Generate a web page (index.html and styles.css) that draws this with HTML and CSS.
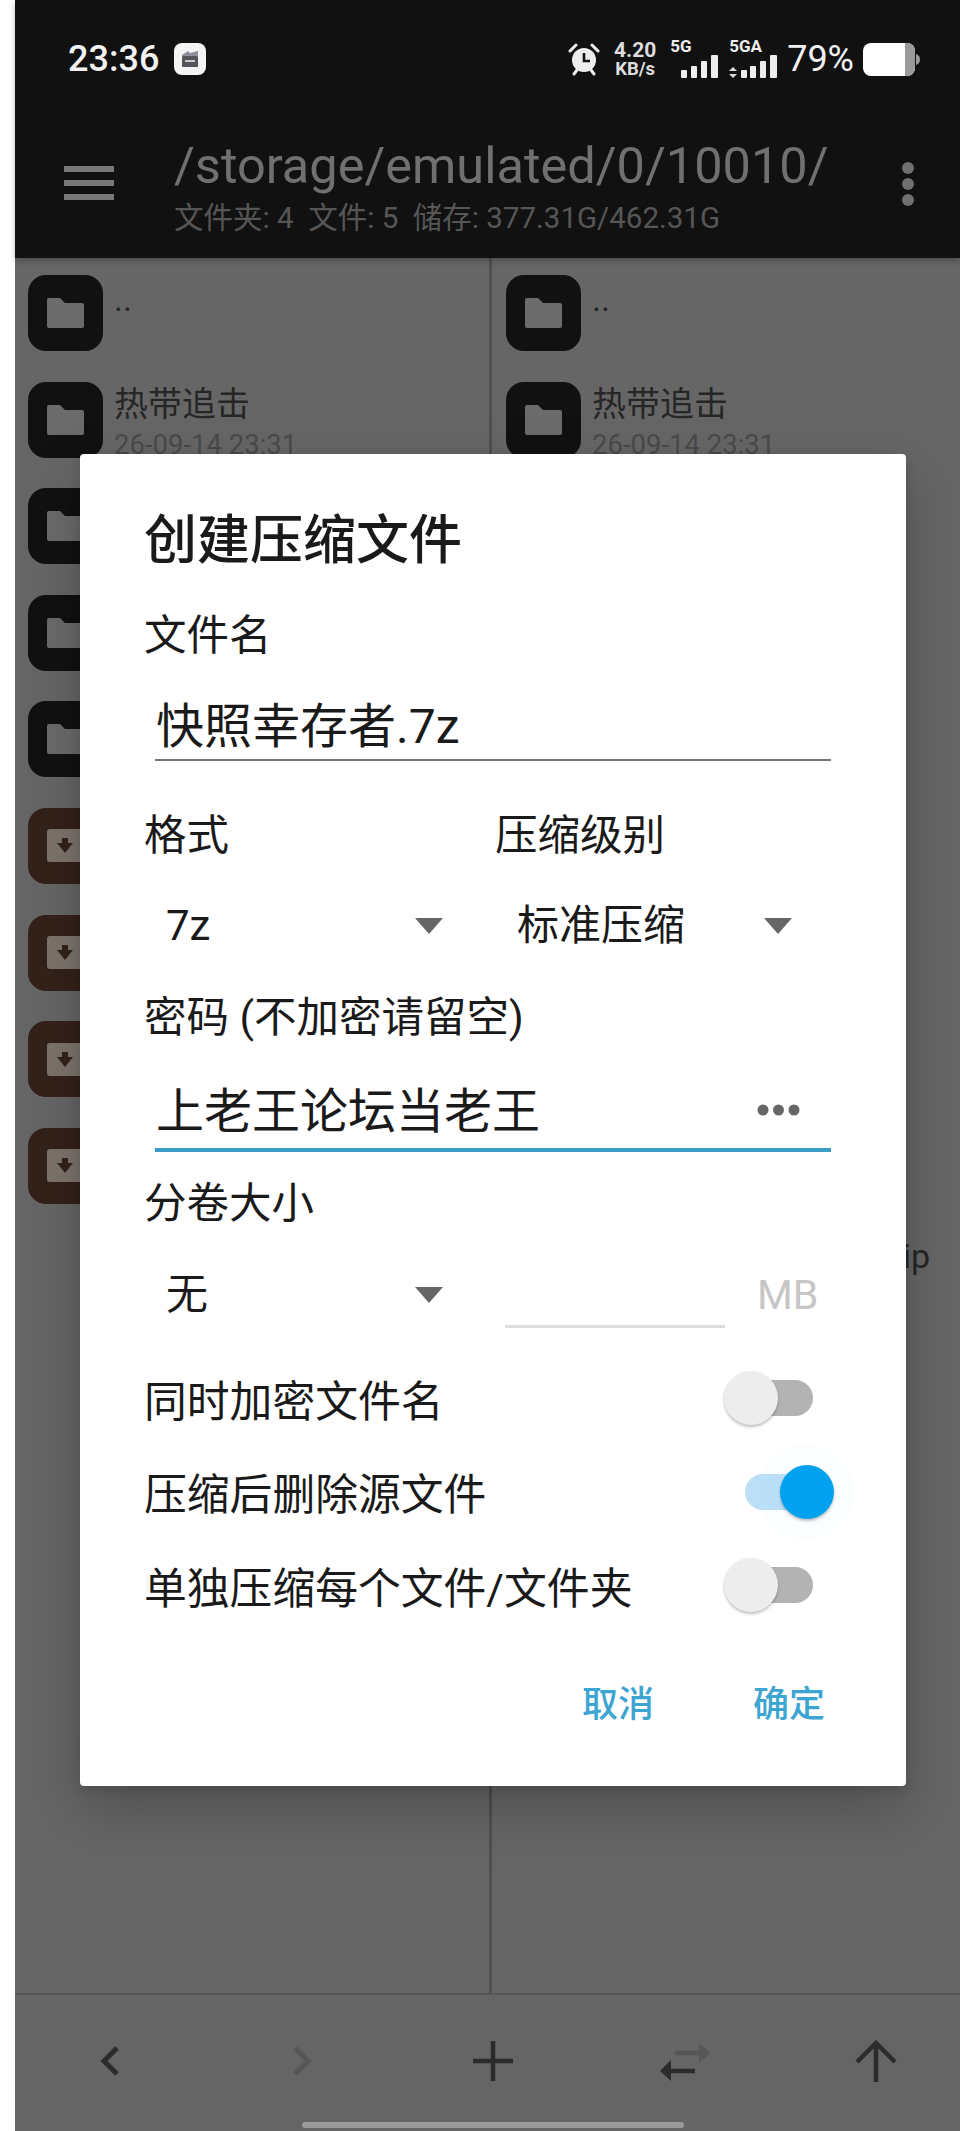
FILE: index.html
```html
<!DOCTYPE html>
<html lang="zh-CN">
<head>
<meta charset="utf-8">
<title>创建压缩文件</title>
<link rel="stylesheet" href="styles.css">
</head>
<body>
<div class="screen">
  <header class="header">
    <div class="status">
      <div class="status-left">
        <span class="time">23:36</span>
        <svg class="app-badge" width="32" height="32" viewBox="0 0 32 32"><rect width="32" height="32" rx="8" fill="#f4f4f4"/><path d="M8 12l6-4 2 2 8-2v5H8z" fill="#8d8f9c"/><rect x="8" y="13" width="16" height="11" rx="1" fill="#55565c"/><rect x="11" y="17" width="10" height="2" fill="#c9c9c9"/></svg>
      </div>
      <div class="status-right">
        <svg class="alarm" width="32" height="34" viewBox="0 0 32 34"><path d="M2 9l6-6M30 9l-6-6" stroke="#eee" stroke-width="3" stroke-linecap="round"/><circle cx="16" cy="18" r="12" fill="#eee"/><path d="M16 11v8h6" fill="none" stroke="#111" stroke-width="2.6"/><path d="M6 32l3-4M26 32l-3-4" stroke="#eee" stroke-width="3" stroke-linecap="round"/></svg>
        <div class="speed"><span class="speed-num">4.20</span><span class="speed-unit">KB/s</span></div>
        <div class="net">
          <span class="net-label">5G</span>
          <svg width="38" height="23" viewBox="0 0 38 23"><rect x="0" y="15" width="6" height="8" rx="1" fill="#eee"/><rect x="10" y="11" width="6" height="12" rx="1" fill="#eee"/><rect x="20" y="6" width="6" height="17" rx="1" fill="#eee"/><rect x="30" y="0" width="7" height="23" rx="1" fill="#eee"/></svg>
        </div>
        <div class="net net-second">
          <span class="net-label">5GA</span>
          <svg width="48" height="23" viewBox="0 0 48 23"><path d="M4 12l4 4H0zM4 23l-4-4h8z" fill="#ddd"/><rect x="12" y="15" width="6" height="8" rx="1" fill="#eee"/><rect x="21" y="11" width="6" height="12" rx="1" fill="#eee"/><rect x="31" y="6" width="6" height="17" rx="1" fill="#eee"/><rect x="41" y="0" width="7" height="23" rx="1" fill="#eee"/></svg>
        </div>
        <span class="percent">79%</span>
        <svg class="battery" width="57" height="33" viewBox="0 0 57 33"><path d="M8 0h36a8 8 0 0 1 8 8v17a8 8 0 0 1-8 8H8a8 8 0 0 1-8-8V8a8 8 0 0 1 8-8z" fill="#fff"/><path d="M42 0h2a8 8 0 0 1 8 8v17a8 8 0 0 1-8 8h-2z" fill="#9a9a9a"/><path d="M53 11c3 1 4 3 4 5.500s-1 4.500-4 5.500z" fill="#9a9a9a"/></svg>
      </div>
    </div>
    <div class="toolbar">
      <div class="burger"><i></i><i></i><i></i></div>
      <div class="path-block">
        <div class="path">/storage/emulated/0/10010/</div>
        <div class="stats">文件夹: 4&nbsp;&nbsp;文件: 5&nbsp;&nbsp;储存: 377.31G/462.31G</div>
      </div>
      <div class="kebab"><i></i><i></i><i></i></div>
    </div>
  </header>

  <main class="panes">
    <section class="pane pane-left">
      <div class="row"><div class="ficon"><svg width="37" height="30" viewBox="0 0 37 30"><path d="M2 0h11l5 5h17a2 2 0 0 1 2 2v21a2 2 0 0 1-2 2H2a2 2 0 0 1-2-2V2a2 2 0 0 1 2-2z" fill="#6b6b6b"/></svg></div><div class="rtext"><div class="rname rname-up">..</div></div></div>
      <div class="row"><div class="ficon"><svg width="37" height="30" viewBox="0 0 37 30"><path d="M2 0h11l5 5h17a2 2 0 0 1 2 2v21a2 2 0 0 1-2 2H2a2 2 0 0 1-2-2V2a2 2 0 0 1 2-2z" fill="#6b6b6b"/></svg></div><div class="rtext"><div class="rname">热带追击</div><div class="rdate">26-09-14 23:31</div></div></div>
      <div class="row"><div class="ficon"><svg width="37" height="30" viewBox="0 0 37 30"><path d="M2 0h11l5 5h17a2 2 0 0 1 2 2v21a2 2 0 0 1-2 2H2a2 2 0 0 1-2-2V2a2 2 0 0 1 2-2z" fill="#6b6b6b"/></svg></div></div>
      <div class="row"><div class="ficon"><svg width="37" height="30" viewBox="0 0 37 30"><path d="M2 0h11l5 5h17a2 2 0 0 1 2 2v21a2 2 0 0 1-2 2H2a2 2 0 0 1-2-2V2a2 2 0 0 1 2-2z" fill="#6b6b6b"/></svg></div></div>
      <div class="row"><div class="ficon"><svg width="37" height="30" viewBox="0 0 37 30"><path d="M2 0h11l5 5h17a2 2 0 0 1 2 2v21a2 2 0 0 1-2 2H2a2 2 0 0 1-2-2V2a2 2 0 0 1 2-2z" fill="#6b6b6b"/></svg></div></div>
      <div class="row"><div class="ficon ficon-zip"><svg width="37" height="33" viewBox="0 0 37 33"><rect width="37" height="33" rx="3" fill="#7d746d"/><path d="M15 9h6v5h5l-8 10-8-10h5z" fill="#33221b"/></svg></div></div>
      <div class="row"><div class="ficon ficon-zip"><svg width="37" height="33" viewBox="0 0 37 33"><rect width="37" height="33" rx="3" fill="#7d746d"/><path d="M15 9h6v5h5l-8 10-8-10h5z" fill="#33221b"/></svg></div></div>
      <div class="row"><div class="ficon ficon-zip"><svg width="37" height="33" viewBox="0 0 37 33"><rect width="37" height="33" rx="3" fill="#7d746d"/><path d="M15 9h6v5h5l-8 10-8-10h5z" fill="#33221b"/></svg></div></div>
      <div class="row"><div class="ficon ficon-zip"><svg width="37" height="33" viewBox="0 0 37 33"><rect width="37" height="33" rx="3" fill="#7d746d"/><path d="M15 9h6v5h5l-8 10-8-10h5z" fill="#33221b"/></svg></div></div>
    </section>
    <section class="pane pane-right">
      <div class="row"><div class="ficon"><svg width="37" height="30" viewBox="0 0 37 30"><path d="M2 0h11l5 5h17a2 2 0 0 1 2 2v21a2 2 0 0 1-2 2H2a2 2 0 0 1-2-2V2a2 2 0 0 1 2-2z" fill="#6b6b6b"/></svg></div><div class="rtext"><div class="rname rname-up">..</div></div></div>
      <div class="row"><div class="ficon"><svg width="37" height="30" viewBox="0 0 37 30"><path d="M2 0h11l5 5h17a2 2 0 0 1 2 2v21a2 2 0 0 1-2 2H2a2 2 0 0 1-2-2V2a2 2 0 0 1 2-2z" fill="#6b6b6b"/></svg></div><div class="rtext"><div class="rname">热带追击</div><div class="rdate">26-09-14 23:31</div></div></div>
      <div class="row"></div>
      <div class="row"></div>
      <div class="row"></div>
      <div class="row"></div>
      <div class="row"></div>
      <div class="row"></div>
      <div class="row"></div>
      <div class="row row-long"><div class="rname">.zip</div></div>
    </section>
  </main>

  <footer class="bottom">
    <svg class="b-back" width="22" height="32" viewBox="0 0 22 32"><path d="M18 3L5 16l13 13" fill="none" stroke="#2b2b2b" stroke-width="5"/></svg>
    <svg class="b-forward" width="22" height="32" viewBox="0 0 22 32"><path d="M4 3l13 13L4 29" fill="none" stroke="#565656" stroke-width="5"/></svg>
    <svg class="b-plus" width="40" height="40" viewBox="0 0 40 40"><path d="M20 0v40M0 20h40" stroke="#2b2b2b" stroke-width="4.500"/></svg>
    <svg class="b-swap" width="52" height="40" viewBox="0 0 52 40"><path d="M16 12h26" stroke="#565656" stroke-width="4.500"/><path d="M40 2l11 10-11 10z" fill="#565656"/><path d="M10 30h26" stroke="#2b2b2b" stroke-width="4.500"/><path d="M12 19L1 30l11 10z" fill="#2b2b2b"/></svg>
    <svg class="b-up" width="42" height="42" viewBox="0 0 42 42"><path d="M21 42V3M2 22L21 3l19 19" fill="none" stroke="#2b2b2b" stroke-width="4.500"/></svg>
  </footer>
  <div class="home"></div>
</div>

<div class="dialog">
  <h1 class="d-title">创建压缩文件</h1>
  <div class="d-label d-label-name">文件名</div>
  <div class="field field-name">快照幸存者.7z</div>
  <div class="two-col two-col-labels">
    <div class="d-label">格式</div>
    <div class="d-label">压缩级别</div>
  </div>
  <div class="two-col two-col-spin">
    <div class="spinner"><span>7z</span><i class="tri"></i></div>
    <div class="spinner"><span>标准压缩</span><i class="tri"></i></div>
  </div>
  <div class="d-label d-label-pass">密码 (不加密请留空)</div>
  <div class="field field-pass"><span>上老王论坛当老王</span><svg width="43" height="12" viewBox="0 0 43 12"><circle cx="6" cy="6" r="5.500" fill="#666"/><circle cx="21.500" cy="6" r="5.500" fill="#666"/><circle cx="37" cy="6" r="5.500" fill="#666"/></svg></div>
  <div class="d-label d-label-vol">分卷大小</div>
  <div class="two-col two-col-vol">
    <div class="spinner"><span>无</span><i class="tri"></i></div>
    <div class="vol-size"><div class="vol-input"></div><span class="vol-unit">MB</span></div>
  </div>
  <div class="opts">
    <div class="opt"><span>同时加密文件名</span><div class="switch"><i class="knob"></i></div></div>
    <div class="opt"><span>压缩后删除源文件</span><div class="switch is-on"><i class="halo"></i><i class="knob"></i></div></div>
    <div class="opt"><span>单独压缩每个文件/文件夹</span><div class="switch"><i class="knob"></i></div></div>
  </div>
  <div class="actions"><span>取消</span><span>确定</span></div>
</div>
</body>
</html>
```

FILE: styles.css
```css
* { box-sizing: border-box; }
html, body { margin: 0; padding: 0; }
body {
  width: 960px;
  height: 2131px;
  overflow: hidden;
  background: #fff;
  position: relative;
  font-family: "Roboto", "Noto Sans CJK SC", sans-serif;
}
.screen {
  margin-left: 15px;
  height: 2131px;
  display: flex;
  flex-direction: column;
  background: #666;
}
.header { height: 258px; background: #111; flex: none; box-shadow: 0 3px 6px rgba(0,0,0,.25); position: relative; z-index: 1; }
.status { height: 118px; display: flex; align-items: center; justify-content: space-between; padding: 0 40px 0 53px; }
.status-left { display: flex; align-items: center; gap: 15px; }
.time { color: #f2f2f2; font-size: 36px; font-weight: 500; line-height: 40px; }
.status-right { display: flex; align-items: center; }
.alarm { margin-right: 13px; }
.speed { display: flex; flex-direction: column; align-items: center; color: #ddd; font-weight: 700; margin-right: 13px; width: 44px; }
.speed-num { font-size: 21px; line-height: 20px; }
.speed-unit { font-size: 18.5px; line-height: 18px; }
.net { position: relative; width: 49px; height: 38px; display: flex; align-items: flex-end; justify-content: flex-end; margin-right: 10px; }
.net-second { width: 48px; margin-right: 10px; }
.net-label { position: absolute; left: 0; top: -3px; color: #eee; font-size: 17px; font-weight: 700; line-height: 18px; }
.percent { color: #f2f2f2; font-size: 36px; line-height: 40px; margin-right: 9px; }
.toolbar { height: 140px; display: flex; align-items: flex-start; }
.burger { width: 50px; margin: 48px 0 0 49px; display: flex; flex-direction: column; gap: 8px; }
.burger i { display: block; height: 6px; background: #777; }
.path-block { margin-left: 60px; width: 660px; }
.path { color: #707070; font-size: 50.5px; line-height: 56px; margin-top: 20px; white-space: nowrap; }
.stats { color: #565656; font-size: 29.5px; line-height: 36px; margin-top: 6px; white-space: nowrap; }
.kebab { margin: 44px 0 0 68px; display: flex; flex-direction: column; gap: 4px; }
.kebab i { display: block; width: 12px; height: 12px; border-radius: 50%; background: #707070; }

.panes { flex: 1; display: flex; border-bottom: 2px solid #555; min-height: 0; }
.pane { padding-top: 17px; overflow: hidden; }
.pane-left { width: 477px; border-right: 3px solid #505050; padding-left: 13px; }
.pane-right { flex: 1; padding-left: 14px; }
.row { height: 106.6px; display: flex; gap: 11px; }
.ficon { width: 75px; height: 76px; flex: none; border-radius: 18px; background: #111; display: flex; align-items: center; justify-content: center; }
.ficon-zip { background: #34221a; }
.rtext { min-width: 0; }
.rname { color: #262626; font-size: 34px; line-height: 44px; white-space: nowrap; }
.rname-up { line-height: 32px; margin-top: 8px; }
.rdate { color: #4a4a4a; font-size: 27.5px; line-height: 34px; margin-top: 2px; }
.row-long { padding-left: 371px; }

.bottom { height: 136px; flex: none; background: #656565; display: grid; grid-template-columns: repeat(5, 40px); justify-content: space-between; justify-items: center; align-items: center; padding: 0 64px 4px 75px; }
.home { position: absolute; left: 302px; top: 2122px; width: 382px; height: 6px; border-radius: 3px; background: #9a9a9a; }

.dialog {
  position: absolute;
  left: 80px;
  top: 454px;
  width: 826px;
  height: 1332px;
  padding: 60px 75px 0 64px;
  background: #fff;
  border-radius: 4px;
  color: #1a1a1a;
  box-shadow: 0 24px 60px rgba(0,0,0,.22), 0 4px 12px rgba(0,0,0,.12);
}
.d-title { margin: 0; font-size: 53px; line-height: 54px; font-weight: 500; white-space: nowrap; }
.d-label { font-size: 42.5px; line-height: 50px; white-space: nowrap; }
.d-label-name { margin-top: 43px; }
.field { margin-left: 11px; padding-left: 1px; font-size: 48px; line-height: 64px; }
.field-name { margin-top: 34px; border-bottom: 2px solid #777; }
.two-col { display: flex; }
.two-col > * { width: 351px; flex: none; }
.two-col-labels { margin-top: 50px; }
.two-col-spin { margin-top: 35px; }
.spinner { display: flex; align-items: center; justify-content: space-between; height: 60px; font-size: 42px; line-height: 60px; padding: 0 52px 0 22px; }
.two-col-spin .spinner:last-child { padding: 0 54px 0 22px; width: 351px; }
.tri { width: 0; height: 0; border-left: 14px solid transparent; border-right: 14px solid transparent; border-top: 16px solid #666; }
.d-label-pass { margin-top: 37px; }
.field-pass { margin-top: 37px; padding-bottom: 4px; border-bottom: 4px solid #3a9dc6; display: flex; justify-content: space-between; align-items: center; padding-right: 31px; }
.field-pass svg { margin-bottom: 4px; }
.d-label-vol { margin-top: 27px; }
.two-col-vol { margin-top: 36px; height: 65px; }
.vol-size { display: flex; gap: 32px; height: 65px; }
.vol-input { width: 220px; height: 63px; border-bottom: 3px solid #ddd; margin-left: 10px; }
.vol-unit { color: #c6c6c6; font-size: 41px; line-height: 60px; }
.opts { margin-top: 25px; }
.opt { height: 93.5px; display: flex; align-items: center; justify-content: space-between; font-size: 42.8px; line-height: 50px; white-space: nowrap; }
.switch { position: relative; width: 68px; height: 36px; margin-right: 18px; margin-bottom: 7px; border-radius: 18px; background: #b3b3b3; }
.knob { position: absolute; left: -21px; top: -9px; width: 54px; height: 54px; border-radius: 50%; background: #ededed; box-shadow: 0 2px 3px rgba(0,0,0,.25); }
.switch.is-on { background: #bde0f7; }
.is-on .knob { left: 35px; background: #03a2f0; }
.halo { position: absolute; left: 13px; top: -30px; width: 96px; height: 96px; border-radius: 50%; background: rgba(3,162,240,.015); }
.actions { display: flex; justify-content: flex-end; gap: 99px; margin: 44px 6px 0 0; color: #3ca5d2; font-size: 36px; line-height: 50px; font-weight: 500; }
```
